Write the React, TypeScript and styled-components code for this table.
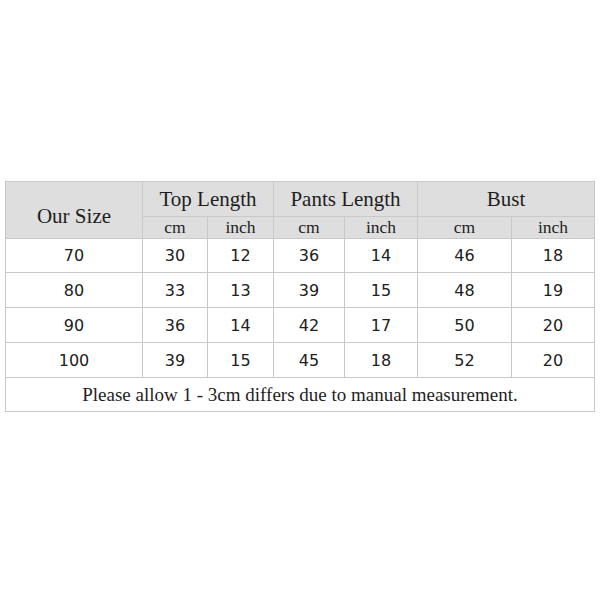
import React from "react"
import styled, { createGlobalStyle } from "styled-components"

const GlobalStyle = createGlobalStyle`
  html, body {
    margin: 0;
    padding: 0;
    background: #ffffff;
  }
`

const Page = styled.div`
  width: 600px;
  height: 600px;
  box-sizing: border-box;
  padding: 181px 6px 0 5px;
  background: #ffffff;
`

const SizeGrid = styled.div`
  display: grid;
  grid-template-columns: 136px 64px 65px 70px 72px 93px 82px;
  grid-template-rows: 34px 21px 33px 34px 34px 34px 33px;
  gap: 1px;
  padding: 1px;
  width: max-content;
  background: #c9c9c9;
`

const Cell = styled.div<{ $head?: boolean; $span?: number; $rows?: number; $drop?: number }>`
  display: flex;
  align-items: center;
  justify-content: center;
  background: ${(p) => (p.$head ? "#dedede" : "#ffffff")};
  grid-column: span ${(p) => p.$span || 1};
  grid-row: span ${(p) => p.$rows || 1};
  padding-top: ${(p) => p.$drop || 0}px;
  box-sizing: border-box;
  color: #1e1e1e;
`

const Title = styled.span`
  font-family: "Liberation Serif", "Times New Roman", serif;
  font-size: 21px;
`

const Unit = styled.span`
  font-family: "Liberation Serif", "Times New Roman", serif;
  font-size: 17.5px;
`

const Num = styled.span`
  font-family: "DejaVu Sans", "Noto Sans", sans-serif;
  font-size: 16px;
  color: #202020;
`

const Note = styled.span`
  font-family: "Liberation Serif", "Times New Roman", serif;
  font-size: 19px;
`

const rows = [
  ["70", "30", "12", "36", "14", "46", "18"],
  ["80", "33", "13", "39", "15", "48", "19"],
  ["90", "36", "14", "42", "17", "50", "20"],
  ["100", "39", "15", "45", "18", "52", "20"],
]

function App() {
  return (
    <Page>
      <GlobalStyle />
      <SizeGrid>
        <Cell $head $rows={2} $drop={12}>
          <Title>Our Size</Title>
        </Cell>
        <Cell $head $span={2}>
          <Title>Top Length</Title>
        </Cell>
        <Cell $head $span={2}>
          <Title>Pants Length</Title>
        </Cell>
        <Cell $head $span={2}>
          <Title>Bust</Title>
        </Cell>
        {["cm", "inch", "cm", "inch", "cm", "inch"].map((u, i) => (
          <Cell $head key={"u" + i}>
            <Unit>{u}</Unit>
          </Cell>
        ))}
        {rows.map((r) =>
          r.map((v, i) => (
            <Cell key={r[0] + "-" + i}>
              <Num>{v}</Num>
            </Cell>
          ))
        )}
        <Cell $span={7}>
          <Note>Please allow 1 - 3cm differs due to manual measurement.</Note>
        </Cell>
      </SizeGrid>
    </Page>
  )
}

export default App
